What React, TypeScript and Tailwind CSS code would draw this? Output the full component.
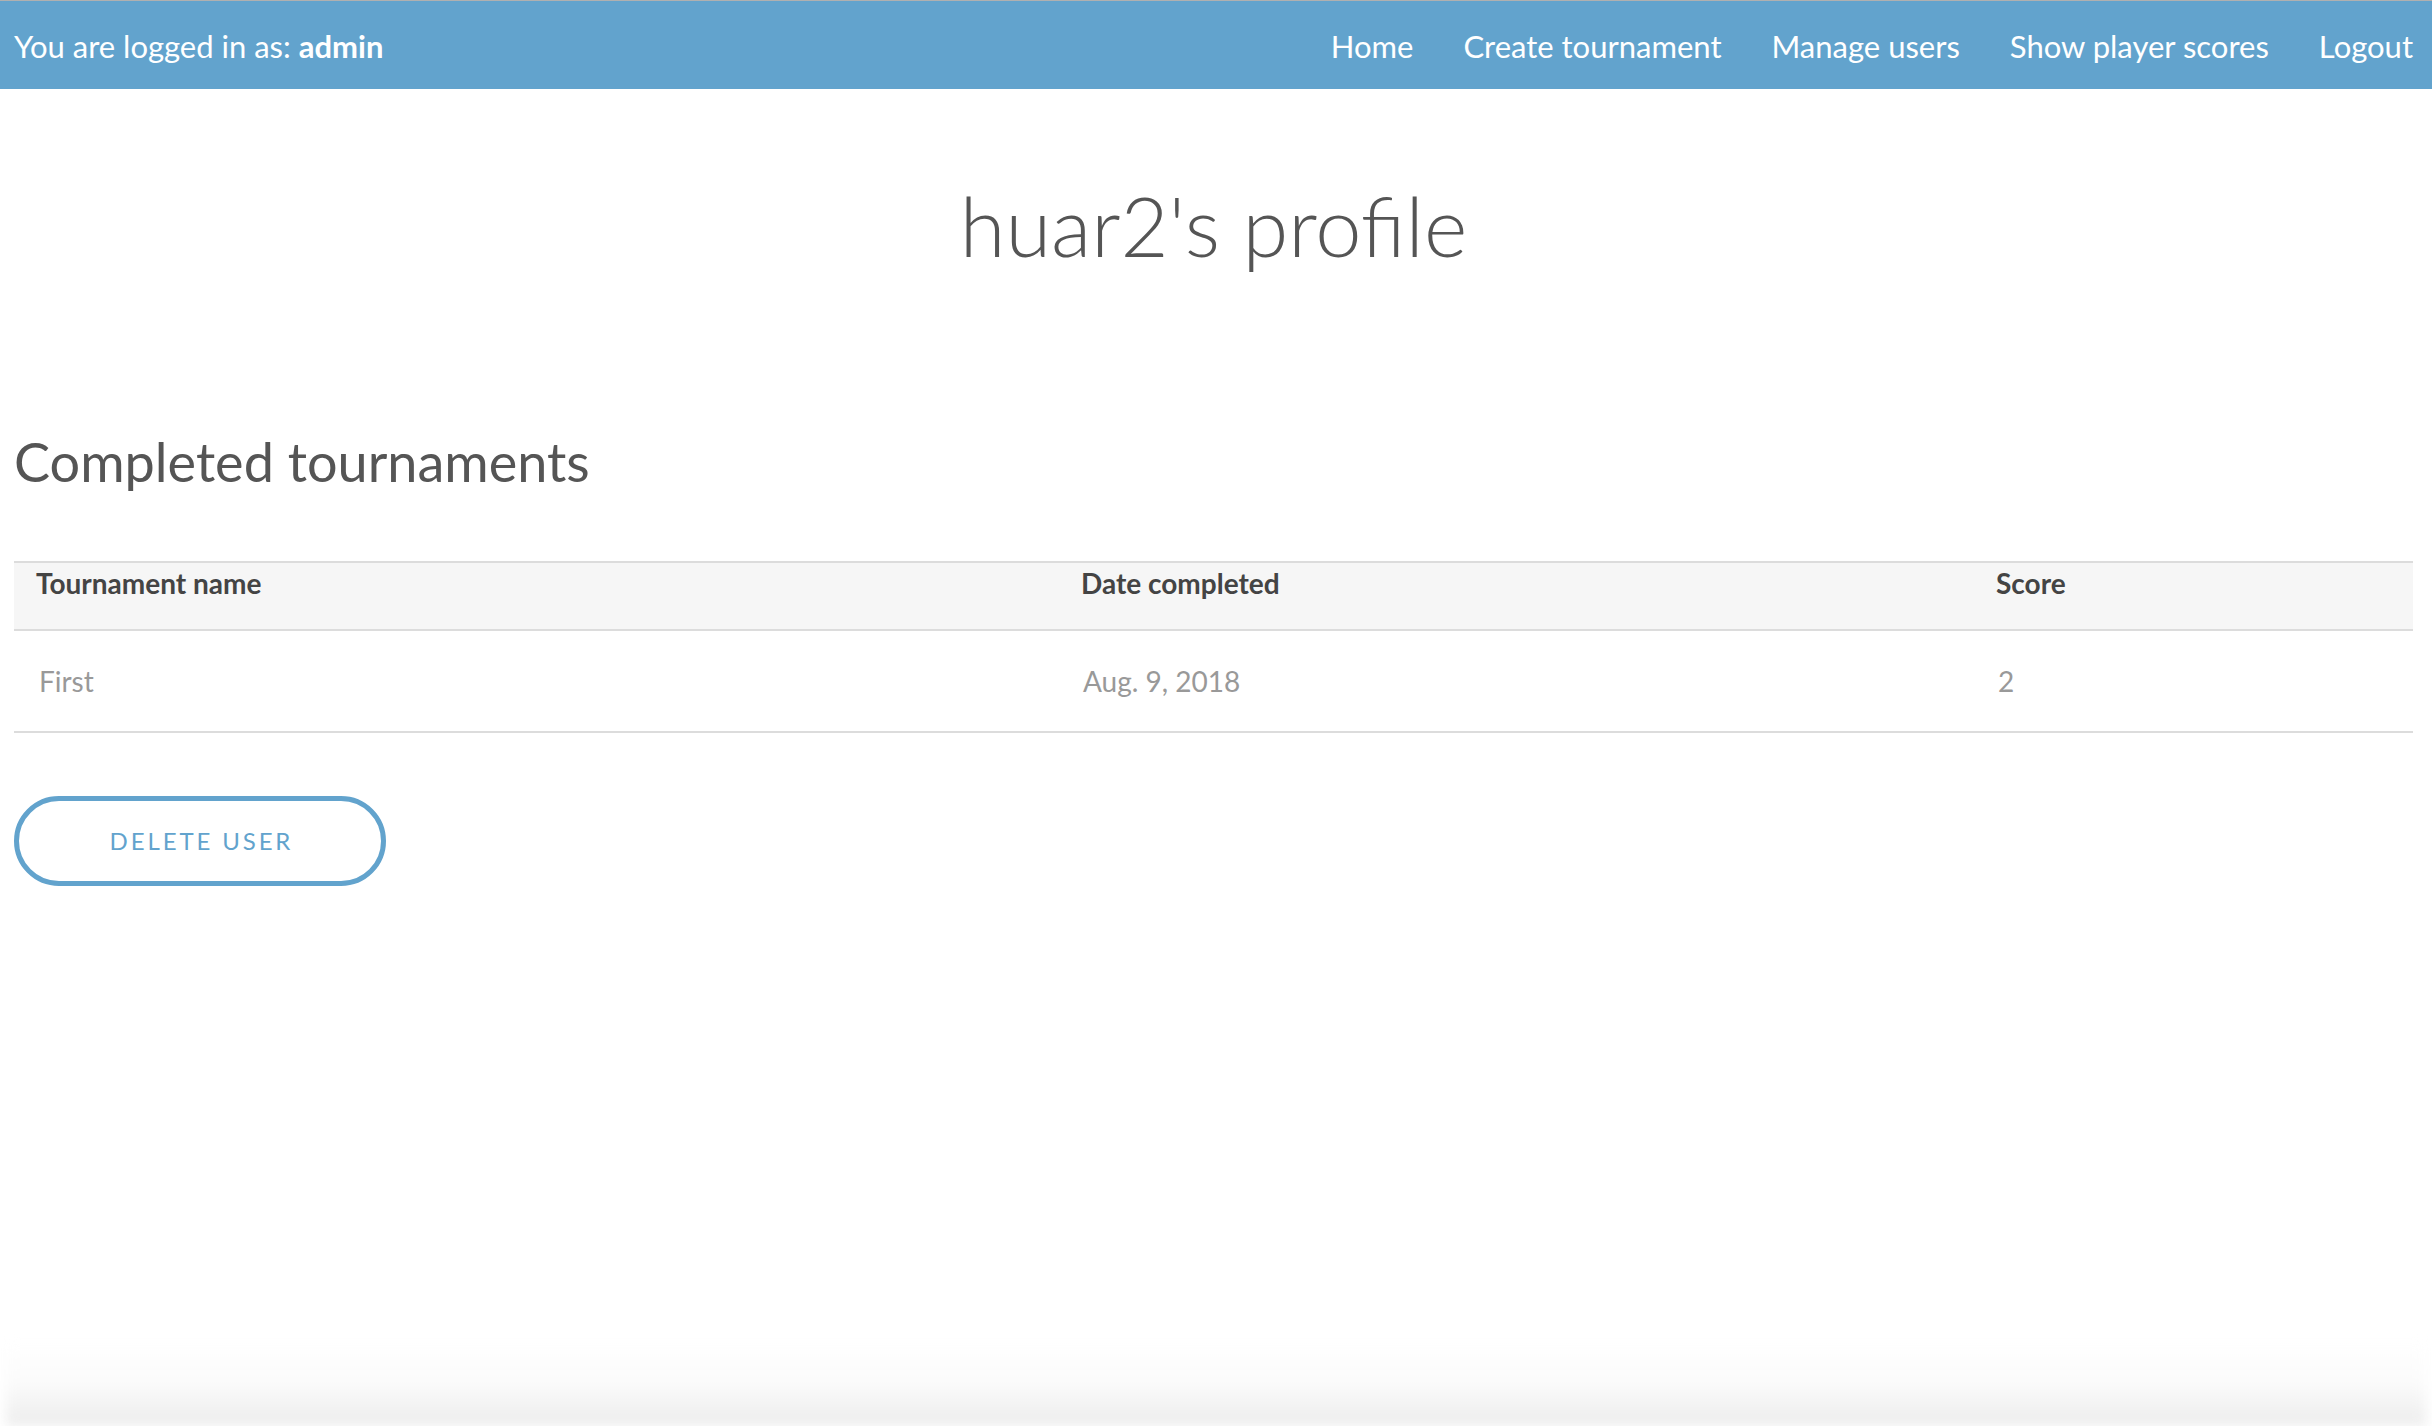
import React from "react";

const rows = [{ name: "First", date: "Aug. 9, 2018", score: "2" }];

export default function App() {
  return (
    <div
      className="w-full h-[1426px] flex flex-col bg-white overflow-hidden"
      style={{ fontFamily: "Lato, 'Open Sans', sans-serif" }}
    >
      <div className="border-t border-[#b0b0b0] h-[89px] bg-[#62a3cd] flex items-center justify-between pl-[14px] pr-[19px] pt-[2px] text-white text-[31px] shrink-0">
        <div>
          You are logged in as: <span className="font-bold">admin</span>
        </div>
        <nav className="flex items-center gap-[50px]">
          <a>Home</a>
          <a>Create tournament</a>
          <a>Manage users</a>
          <a>Show player scores</a>
          <a>Logout</a>
        </nav>
      </div>
      <main className="flex-1 pl-[14px] pr-[19px]">
        <h1 className="mt-[86px] text-center text-[83px] leading-[100px] font-light text-[#555]">
          huar2's profile
        </h1>
        <h2 className="mt-[152px] text-[54px] leading-[70px] text-[#555]">
          Completed tournaments
        </h2>
        <div className="mt-[64px] border-t-2 border-[#dcdcdc]">
          <div className="grid grid-cols-[1045px_915px_1fr] bg-[#f6f6f6] border-b-2 border-[#dcdcdc] h-[68px] text-[28px] leading-[32px] font-bold text-[#444]">
            <div className="pl-[22px] pt-[4px]">Tournament name</div>
            <div className="pl-[22px] pt-[4px]">Date completed</div>
            <div className="pl-[22px] pt-[4px]">Score</div>
          </div>
          {rows.map((r) => (
            <div
              key={r.name}
              className="grid grid-cols-[1045px_915px_1fr] border-b-2 border-[#dcdcdc] h-[102px] items-center text-[28px] text-[#999]"
            >
              <div className="pl-[25px]">{r.name}</div>
              <div className="pl-[24px]">{r.date}</div>
              <div className="pl-[24px]">{r.score}</div>
            </div>
          ))}
        </div>
        <button className="mt-[63px] w-[372px] h-[90px] rounded-full border-[5px] border-[#62a3cd] text-[#62a3cd] text-[24px] tracking-[0.12em] pl-[0.12em] flex items-center justify-center">
          DELETE USER
        </button>
      </main>
      <div className="h-[86px] shrink-0 px-[6px]">
        <div className="h-full bg-gradient-to-b from-white via-[#fbfbfb] to-[#ececec] blur-[6px]" />
      </div>
    </div>
  );
}
